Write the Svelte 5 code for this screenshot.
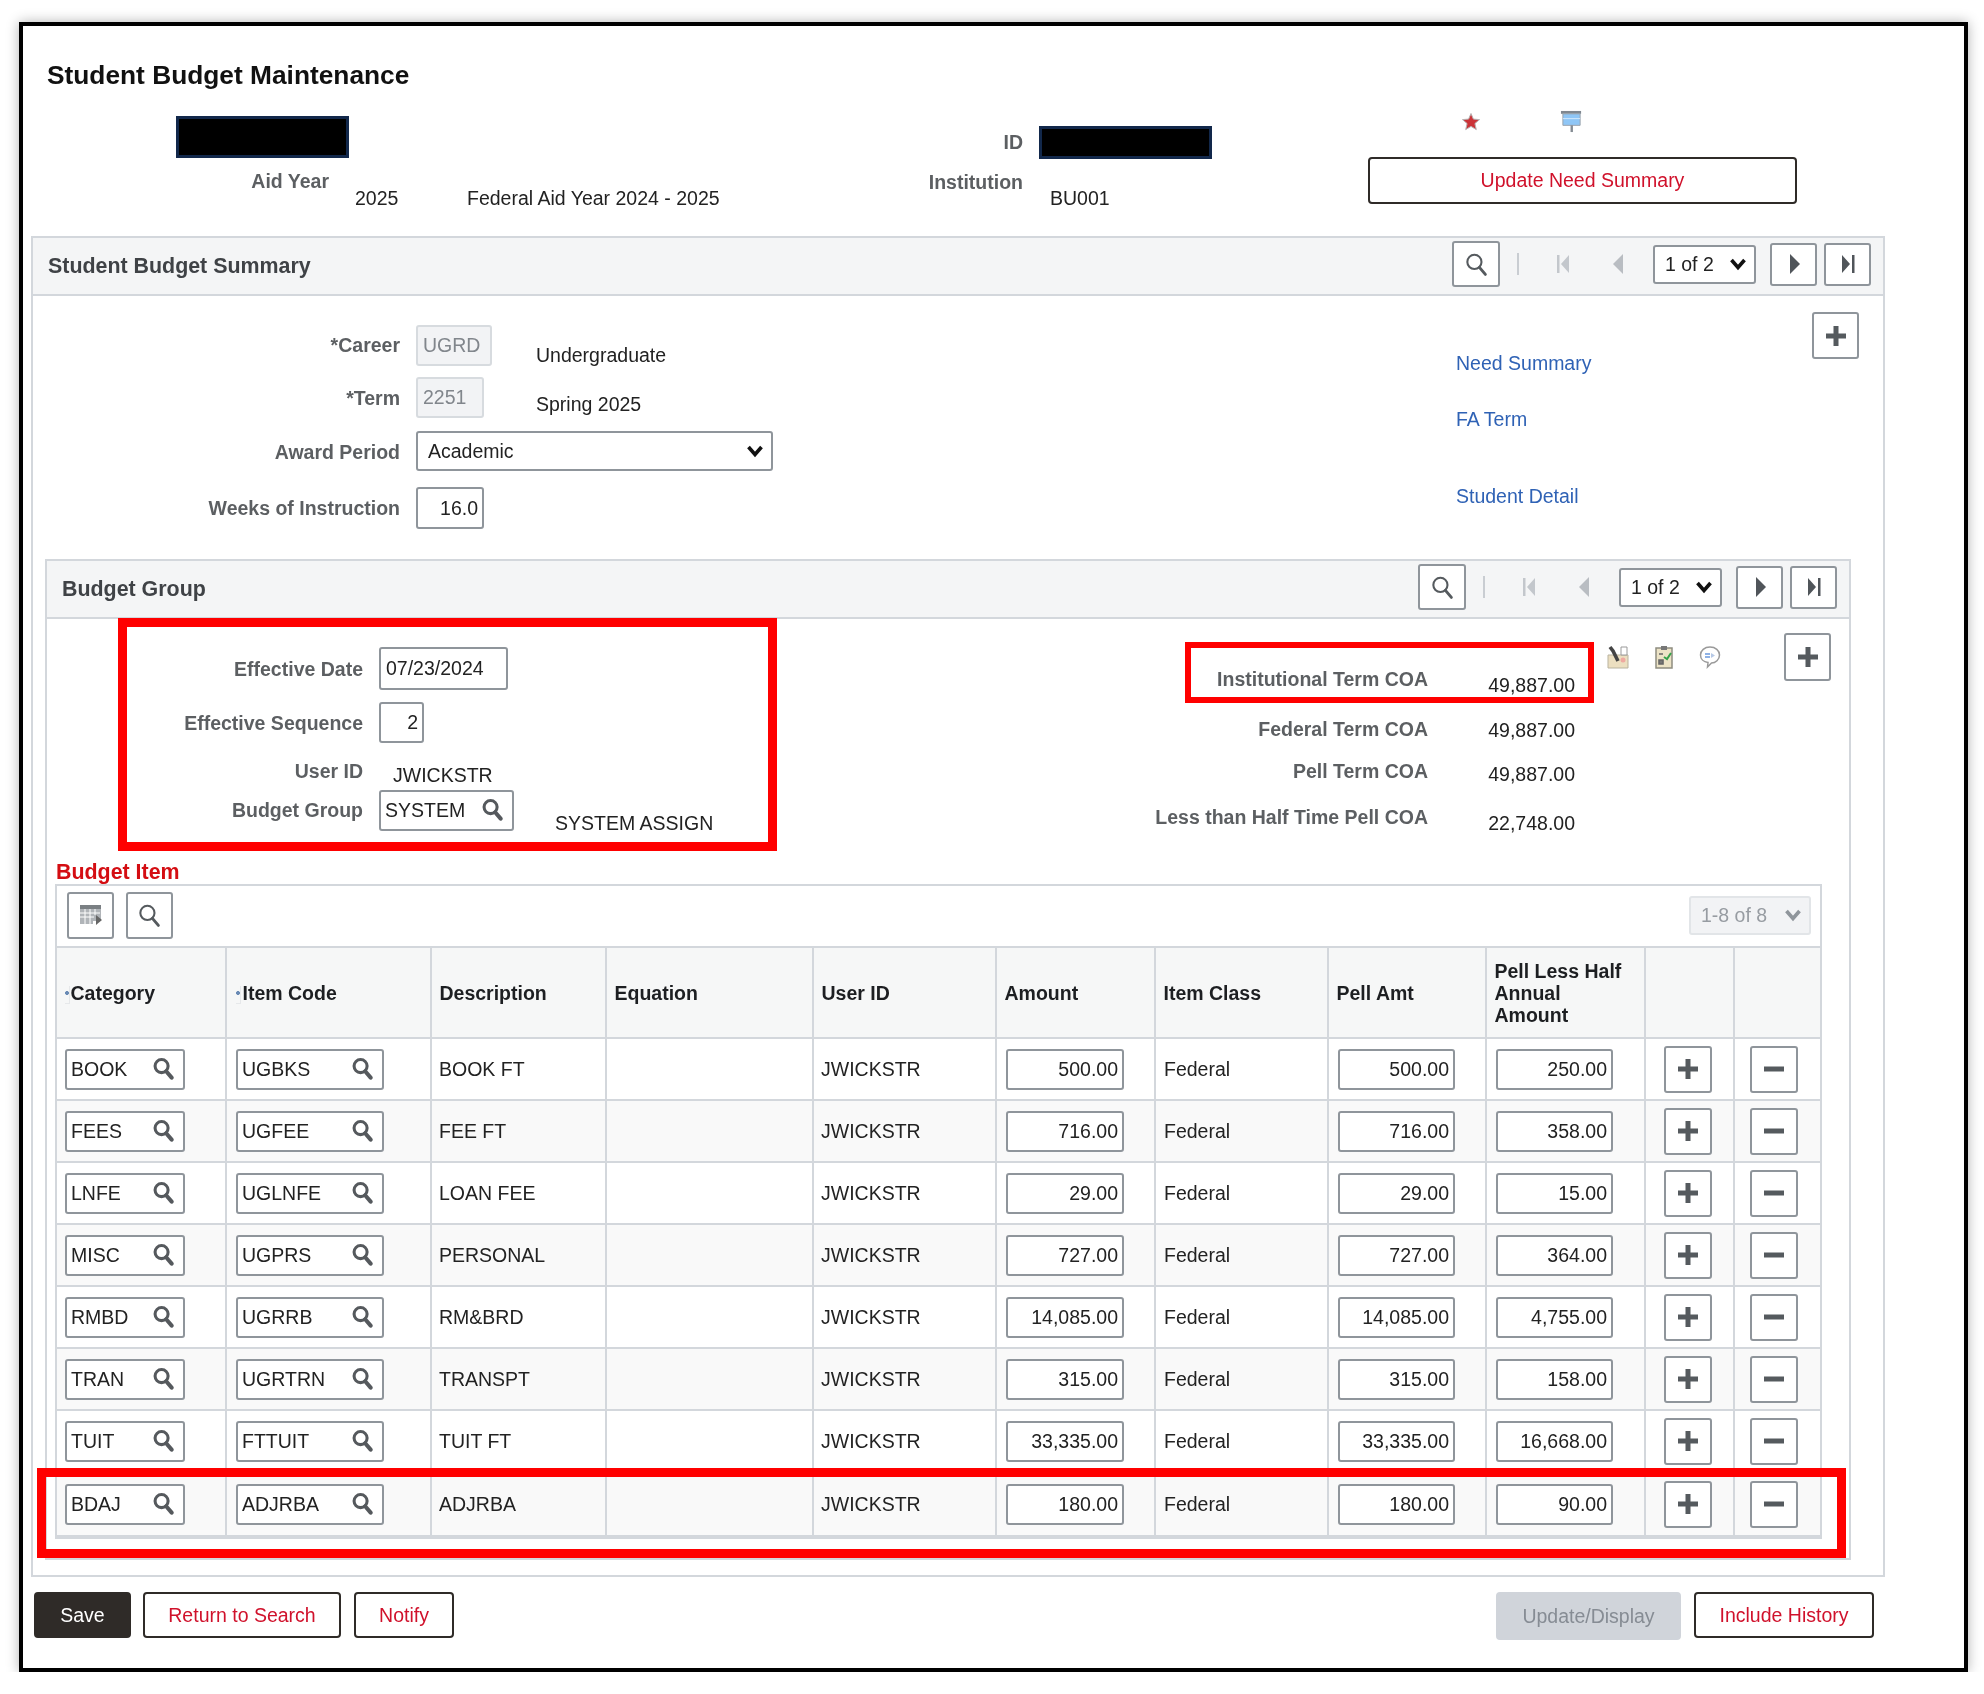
<script>
  const rows = [
    ['BOOK', 'UGBKS', 'BOOK FT', '500.00', '500.00', '250.00'],
    ['FEES', 'UGFEE', 'FEE FT', '716.00', '716.00', '358.00'],
    ['LNFE', 'UGLNFE', 'LOAN FEE', '29.00', '29.00', '15.00'],
    ['MISC', 'UGPRS', 'PERSONAL', '727.00', '727.00', '364.00'],
    ['RMBD', 'UGRRB', 'RM&BRD', '14,085.00', '14,085.00', '4,755.00'],
    ['TRAN', 'UGRTRN', 'TRANSPT', '315.00', '315.00', '158.00'],
    ['TUIT', 'FTTUIT', 'TUIT FT', '33,335.00', '33,335.00', '16,668.00'],
    ['BDAJ', 'ADJRBA', 'ADJRBA', '180.00', '180.00', '90.00']
  ];
  const coa = [
    ['Institutional Term COA', '49,887.00'],
    ['Federal Term COA', '49,887.00'],
    ['Pell Term COA', '49,887.00'],
    ['Less than Half Time Pell COA', '22,748.00']
  ];
  const widths = [170, 205, 175, 207, 183, 159, 173, 158, 159, 89, 85];
</script>

{#snippet searchIcon(cls)}
  <svg class={cls} viewBox="0 0 24 24" aria-hidden="true"><circle cx="10" cy="9.500" r="6.800" fill="none" stroke="currentColor"/><path d="M14.800 14.800 20.500 21.500" stroke="currentColor" stroke-linecap="round"/></svg>
{/snippet}

{#snippet chevron()}
  <svg class="chev" viewBox="0 0 18 14" aria-hidden="true"><path d="M2.500 3 9 10.500 15.500 3" fill="none" stroke="currentColor" stroke-width="3.600"/></svg>
{/snippet}

{#snippet plus()}
  <svg class="sign" viewBox="0 0 24 24" aria-hidden="true"><path d="M9.500 2h5v7.500H22v5h-7.500V22h-5v-7.500H2v-5h7.500z" fill="#555a5e"/></svg>
{/snippet}

{#snippet pager()}
  <div class="pager">
    <button class="ibtn search-b">{@render searchIcon('s-thin')}</button>
    <span class="sep"></span>
    <svg class="p-first" viewBox="0 0 14 22" aria-hidden="true"><path d="M1 2h2.500v18H1zM13 2v18L5 11z" fill="#c3c7cc"/></svg>
    <svg class="p-prev" viewBox="0 0 12 22" aria-hidden="true"><path d="M11 1v20L1 11z" fill="#b9bdc2"/></svg>
    <div class="sel pg-sel"><select><option>1 of 2</option></select>{@render chevron()}</div>
    <button class="ibtn nav-b"><svg class="p-nav" viewBox="0 0 14 22" aria-hidden="true"><path d="M3 1v20L13 11z" fill="#50555a"/></svg></button>
    <button class="ibtn nav-b last"><svg class="p-nav" viewBox="0 0 14 22" aria-hidden="true"><path d="M1 2v18L9 11zM11 2h2.500v18H11z" fill="#50555a"/></svg></button>
  </div>
{/snippet}

<div class="frame">
  <h1>Student Budget Maintenance</h1>

  <div class="head">
    <div class="h-left">
      <div class="redact r-name"></div>
      <div class="aid">
        <span class="lab">Aid Year</span>
        <span class="val">2025</span>
        <span class="val">Federal Aid Year 2024 - 2025</span>
      </div>
    </div>
    <div class="h-mid">
      <div class="id-row"><span class="lab">ID</span><div class="redact r-id"></div></div>
      <div class="inst"><span class="lab">Institution</span><span class="val">BU001</span></div>
    </div>
    <div class="h-right">
      <div class="top-icons">
        <svg class="star" viewBox="0 0 20 20" aria-hidden="true"><path d="M10 1.500l2.400 5.600 6.100.5-4.600 4 1.400 6L10 14.400l-5.300 3.200 1.400-6-4.600-4 6.100-.5z" fill="#cb3338" stroke="#b9b4b4" stroke-width="1"/></svg>
        <svg class="pin" viewBox="0 0 24 24" aria-hidden="true"><path d="M1 1h21v3H1z" fill="#7f8790"/><path d="M3 4h18v12H3z" fill="#8fc6f6" stroke="#9aa2aa"/><path d="M3 9h18" stroke="#d5e9fb"/><path d="M11 16h2.500v7H11z" fill="#858c94"/></svg>
      </div>
      <button class="btn outline need">Update Need Summary</button>
    </div>
  </div>

  <section class="panel outer">
    <div class="panel-head"><h2>Student Budget Summary</h2>{@render pager()}</div>
    <div class="sum-body">
      <div class="sum-form">
        <div class="frow r1"><span class="lab fl">*Career</span><input class="inp off w-career" readonly value="UGRD" /><span class="val d1">Undergraduate</span></div>
        <div class="frow r2"><span class="lab fl">*Term</span><input class="inp off w-term" readonly value="2251" /><span class="val d2">Spring 2025</span></div>
        <div class="frow r3"><span class="lab fl">Award Period</span><div class="sel award"><select><option>Academic</option></select>{@render chevron()}</div></div>
        <div class="frow r4"><span class="lab fl">Weeks of Instruction</span><input class="inp num w-term tall" readonly value="16.0" /></div>
      </div>
      <div class="links">
        <a href="#need">Need Summary</a>
        <a href="#term">FA Term</a>
        <a href="#detail">Student Detail</a>
      </div>
      <button class="ibtn add add-1">{@render plus()}</button>
    </div>

    <section class="panel inner">
      <div class="panel-head"><h2>Budget Group</h2>{@render pager()}</div>
      <div class="grp-body">
        <div class="grp-form">
          <div class="grow g1"><span class="lab gl">Effective Date</span><input class="inp w-date" readonly value="07/23/2024" /></div>
          <div class="grow g2"><span class="lab gl">Effective Sequence</span><input class="inp num w-seq" readonly value="2" /></div>
          <div class="grow g3"><span class="lab gl">User ID</span><span class="val uid">JWICKSTR</span></div>
          <div class="grow g4"><span class="lab gl">Budget Group</span>
            <div class="lookup w-group"><span>SYSTEM</span>{@render searchIcon('s-bold')}</div>
            <span class="val assign">SYSTEM ASSIGN</span>
          </div>
        </div>
        <div class="coa">
          {#each coa as [label, amount]}
            <div class="coa-row"><span class="lab">{label}</span><span class="val">{amount}</span></div>
          {/each}
        </div>
        <div class="side">
          <svg class="mini" viewBox="0 0 22 24" aria-hidden="true"><path d="M1 10h20v13H1z" fill="#ecdfc0" stroke="#b9b39f"/><path d="M14 2h6v8h-6z" fill="#fff" stroke="#9a9a9a"/><path d="M3 2l3 4 5 10" fill="none" stroke="#444" stroke-width="3.600"/><circle cx="16" cy="15" r="2.500" fill="#efa9a0"/></svg>
          <svg class="mini" viewBox="0 0 22 24" aria-hidden="true"><path d="M3 3h16v20H3z" fill="#ece3c6" stroke="#8f8d80" stroke-width="1.500"/><path d="M8 1h6v4H8z" fill="#777"/><path d="M6 9h4M6 15h4v4H6z" stroke="#666" stroke-width="1.600" fill="#777"/><path d="M11 12l3 2 4-6" fill="none" stroke="#35a14a" stroke-width="2"/></svg>
          <svg class="mini" viewBox="0 0 22 24" aria-hidden="true"><path d="M11 2c5.500 0 9.500 3.500 9.500 8s-4 8-8 8l-4 4 .5-4.500C4.500 17 1.500 14 1.500 10 1.500 5.500 5.500 2 11 2z" fill="#fff" stroke="#9a9a9a" stroke-width="1.500"/><path d="M6 9h5M6 12h5" stroke="#8fb2e6" stroke-width="2"/><path d="M12 8l4 2.500-4 2.500z" fill="#b7c9e6"/></svg>
          <button class="ibtn add add-2">{@render plus()}</button>
        </div>
      </div>

      <h3>Budget Item</h3>
      <div class="grid">
        <div class="toolbar">
          <button class="ibtn tool"><svg class="t-icon" viewBox="0 0 24 24" aria-hidden="true"><path d="M1 2h21v4H1z" fill="#7a7f83"/><path d="M1 6h21v12H14v3H1z" fill="#b0b4b8"/><path d="M1 10h20M1 14h14M6 6v15M11 6v15M16 6v6" stroke="#fff" stroke-width="1"/><path d="M17 12l6 5-6 5z" fill="#666"/></svg></button>
          <button class="ibtn tool t2">{@render searchIcon('s-thin')}</button>
          <div class="sel count"><select disabled><option>1-8 of 8</option></select>{@render chevron()}</div>
        </div>
        <table>
          <colgroup>
            {#each widths as w}<col style="width:{w}px" />{/each}
          </colgroup>
          <thead>
            <tr>
              <th><i class="req"></i>Category</th>
              <th class="th-code"><i class="req"></i>Item Code</th>
              <th>Description</th>
              <th>Equation</th>
              <th>User ID</th>
              <th>Amount</th>
              <th>Item Class</th>
              <th>Pell Amt</th>
              <th>Pell Less Half<br />Annual<br />Amount</th>
              <th></th>
              <th></th>
            </tr>
          </thead>
          <tbody>
            {#each rows as [cat, code, desc, amt, pell, half]}
              <tr>
                <td><div class="lookup w-cat"><span>{cat}</span>{@render searchIcon('s-bold')}</div></td>
                <td><div class="lookup w-code"><span>{code}</span>{@render searchIcon('s-bold')}</div></td>
                <td class="txt">{desc}</td>
                <td></td>
                <td class="txt">JWICKSTR</td>
                <td><input class="inp num w-amt" readonly value={amt} /></td>
                <td class="txt cls">Federal</td>
                <td><input class="inp num w-pell" readonly value={pell} /></td>
                <td><input class="inp num w-half" readonly value={half} /></td>
                <td><button class="ibtn row-b b-plus">{@render plus()}</button></td>
                <td><button class="ibtn row-b b-minus"><svg class="sign" viewBox="0 0 24 24" aria-hidden="true"><path d="M2 9.500h20v5H2z" fill="#555a5e"/></svg></button></td>
              </tr>
            {/each}
          </tbody>
        </table>
      </div>
    </section>
  </section>

  <div class="foot">
    <button class="btn save">Save</button>
    <button class="btn outline ret">Return to Search</button>
    <button class="btn outline notify">Notify</button>
    <button class="btn update">Update/Display</button>
    <button class="btn outline hist">Include History</button>
  </div>

  <div class="mark mark-a"></div>
  <div class="mark mark-b"></div>
  <div class="mark mark-c"></div>
</div>

<style>
  :global(body) { margin: 0; background: #fff; }
  * { box-sizing: border-box; }
  .frame {
    position: relative;
    margin: 22px 0 0 19px;
    width: 1949px;
    height: 1650px;
    border: 4px solid #000;
    box-shadow: 0 0 12px rgba(0, 0, 0, .3);
    font: 19.5px/24px "Liberation Sans", Arial, sans-serif;
    color: #222;
    background: #fff;
    filter: blur(.55px);
  }
  h1 { margin: 34px 0 0 24px; font-size: 26.3px; line-height: 30px; color: #111; height: 31px; }
  .lab { font-weight: 700; color: #5c5f62; }
  .val { color: #222; }

  /* page heading */
  .head { display: flex; height: 145px; }
  .h-left { width: 700px; }
  .h-mid { width: 645px; }
  .redact { background: #000; border: 3px solid #12284b; }
  .r-name { margin: 25px 0 0 153px; width: 173px; height: 42px; }
  .r-id { width: 173px; height: 33px; }
  .aid { display: flex; margin-top: 11px; }
  .aid .lab { width: 306px; text-align: right; }
  .aid .val { padding-top: 17px; }
  .aid .val:nth-child(2) { margin-left: 26px; width: 112px; }
  .id-row { display: flex; align-items: center; margin-top: 35px; }
  .id-row .lab { width: 300px; margin-right: 16px; padding-bottom: 2px; text-align: right; }
  .inst { display: flex; margin-top: 11px; }
  .inst .lab { width: 300px; text-align: right; }
  .inst .val { margin-left: 27px; padding-top: 16px; }
  .top-icons { display: flex; align-items: center; height: 23px; margin: 19px 0 0 93px; }
  .star { width: 20px; height: 20px; }
  .pin { width: 23px; height: 23px; margin-left: 79px; }

  .btn {
    display: block;
    padding: 0;
    font: inherit;
    border-radius: 4px;
    border: 2px solid #2f2b28;
    background: #fff;
    height: 46px;
  }
  .outline { color: #d0112b; }
  .need { width: 429px; height: 47px; margin-top: 24px; padding-bottom: 2px; }

  /* panels */
  .panel { border: 2px solid #d3d7dc; }
  .outer { margin-left: 8px; width: 1854px; height: 1341px; }
  .inner { margin-left: 12px; width: 1806px; height: 1001px; }
  .panel-head {
    display: flex;
    align-items: center;
    height: 58px;
    padding: 0 12px 4px 15px;
    background: #f4f5f6;
    border-bottom: 2px solid #d3d7dc;
  }
  h2 { margin: 4px 0 0; font-size: 21.4px; font-weight: 700; color: #3f4246; }
  .pager { display: flex; align-items: center; margin-left: auto; }
  .ibtn {
    display: flex;
    align-items: center;
    justify-content: center;
    padding: 0;
    background: #fff;
    border: 2px solid #8f959b;
    border-radius: 3px;
    color: #555a5e;
  }
  .search-b { width: 48px; height: 46px; }
  .sep { width: 2px; height: 22px; margin-left: 17px; background: #c9cdd2; }
  .p-first { width: 14px; height: 22px; margin-left: 37px; }
  .p-prev { width: 12px; height: 22px; margin-left: 42px; }
  .pg-sel { width: 103px; height: 39px; margin-left: 29px; }
  .nav-b { width: 47px; height: 43px; margin-left: 14px; }
  .nav-b.last { margin-left: 7px; }
  .p-nav { width: 14px; height: 22px; }
  .s-thin { width: 25px; height: 25px; }
  .s-thin circle { stroke-width: 2; }
  .s-thin path { stroke-width: 2.800; }
  .s-bold { flex: none; width: 23px; height: 23px; margin-top: -1px; color: #55595d; }
  .s-bold circle { stroke-width: 3.200; }
  .s-bold path { stroke-width: 4.200; }

  .sel { position: relative; display: block; }
  .sel select {
    appearance: none;
    display: block;
    width: 100%;
    height: 100%;
    padding: 0 0 0 10px;
    font: inherit;
    color: #222;
    background: #fff;
    border: 2px solid #8f959b;
    border-radius: 3px;
    opacity: 1;
  }
  .chev { position: absolute; right: 9px; top: 50%; width: 18px; height: 14px; margin-top: -7px; color: #111; pointer-events: none; }
  .inp {
    display: block;
    height: 41px;
    padding: 0 5px;
    font: inherit;
    color: #222;
    background: #fff;
    border: 2px solid #8f959b;
    border-radius: 3px;
    outline: none;
  }
  .num { text-align: right; padding-right: 4px; }
  .off { background: #f2f3f5; border-color: #d7dbdf; color: #81868c; }

  /* summary */
  .sum-body { display: flex; height: 263px; }
  .sum-form { width: 1423px; padding-top: 27px; }
  .frow { display: flex; align-items: center; }
  .fl { width: 367px; margin-right: 16px; text-align: right; }
  .r2 { margin-top: 10px; }
  .r3 { margin-top: 13px; }
  .r3 .fl { padding-top: 2px; }
  .r4 { margin-top: 16px; }
  .w-career { width: 76px; }
  .w-term { width: 68px; }
  .tall { height: 42px; }
  .d1 { margin-left: 44px; padding-top: 20px; }
  .d2 { margin-left: 52px; padding-top: 13px; }
  .award { width: 357px; height: 40px; }
  .links { width: 356px; padding-top: 55px; display: flex; flex-direction: column; }
  .links a { color: #2f62b5; text-decoration: none; }
  .links a:nth-child(2) { margin-top: 32px; }
  .links a:nth-child(3) { margin-top: 53px; }
  .add { width: 47px; height: 47px; }
  .add-1 { margin-top: 16px; }
  .sign { width: 24px; height: 24px; }

  /* budget group */
  .grp-body { display: flex; height: 241px; }
  .grp-form { width: 1001px; padding-top: 28px; }
  .grow { display: flex; align-items: center; }
  .gl { width: 316px; margin-right: 16px; text-align: right; }
  .g1 .inp { height: 43px; }
  .w-date { width: 129px; }
  .w-seq { width: 45px; }
  .g2 { margin-top: 12px; }
  .g3 { margin-top: 16px; height: 26px; align-items: flex-start; }
  .uid { margin: 4px 0 0 14px; }
  .w-group { width: 135px; height: 42px; }
  .assign { margin-left: 41px; padding-top: 26px; }
  .lookup {
    display: flex;
    align-items: center;
    justify-content: space-between;
    height: 41px;
    padding: 0 8px 0 4px;
    background: #fff;
    border: 2px solid #8f959b;
    border-radius: 3px;
  }
  .coa { width: 527px; padding-top: 48px; }
  .coa-row { display: flex; height: 46px; }
  .coa-row .lab { width: 380px; text-align: right; }
  .coa-row .val { width: 147px; text-align: right; }
  .coa-row:nth-child(1) { height: 50px; }
  .coa-row:nth-child(1) .val { padding-top: 6px; }
  .coa-row:nth-child(2) { height: 42px; }
  .coa-row:nth-child(2) .val { padding-top: 1px; }
  .coa-row:nth-child(3) .val { padding-top: 3px; }
  .coa-row:nth-child(4) .val { padding-top: 6px; }
  .side { display: flex; align-items: center; align-self: flex-start; margin: 14px 0 0 32px; }
  .mini { width: 22px; height: 24px; margin-right: 24px; }
  .add-2 { margin-left: 39px; height: 48px; }

  h3 { margin: 0 0 0 9px; font-size: 21.4px; line-height: 24px; font-weight: 700; color: #d40d12; }
  .grid { margin-left: 8px; width: 1767px; border: 2px solid #d3d7dc; border-top: 0; border-bottom-width: 4px; }
  .toolbar { display: flex; align-items: center; height: 64px; padding: 0 9px 2px 10px; border-top: 2px solid #d3d7dc; border-bottom: 2px solid #d3d7dc; }
  .tool { width: 47px; height: 47px; }
  .t2 { margin-left: 12px; }
  .t-icon { width: 24px; height: 24px; }
  .count { margin-left: auto; width: 122px; height: 39px; }
  .count select { background: #f2f3f5; border-color: #e2e5e8; color: #979ca2; }
  .count .chev { color: #8f959b; }

  table { width: 1763px; table-layout: fixed; border-collapse: separate; border-spacing: 0; }
  th, td { padding: 0; border-right: 2px solid #d3d7dc; border-bottom: 2px solid #d3d7dc; }
  th:last-child, td:last-child { border-right: 0; }
  tbody tr:last-child td { border-bottom: 0; }
  th { height: 91px; padding-left: 7.500px; background: #f6f7f7; text-align: left; font-weight: 700; line-height: 22px; color: #1d1f22; }
  .th-code { padding-left: 8.500px; }
  .th-code .req { margin-right: 2px; }
  td { height: 62px; background: #fff; }
  tbody tr:nth-child(even) td { background: #f9f9f9; }
  .req { display: inline-block; width: 5px; height: 18px; margin-right: 1px; vertical-align: -4px; background: radial-gradient(circle at 2px 7px, #6a8bb5 1.800px, transparent 2.200px); border-right: 1px solid #e6e8ea; border-bottom: 1px solid #e6e8ea; }
  .txt { padding-left: 7px; }
  .cls { padding-left: 8px; }
  td > .lookup, td > .inp, td > .ibtn { margin-left: 9px; }
  td:first-child > .lookup { margin-left: 8px; }
  .w-cat { width: 120px; }
  .w-code { width: 148px; }
  .w-amt { width: 118px; }
  .w-pell { width: 117px; }
  .w-half { width: 117px; }
  td > .row-b { width: 48px; height: 47px; }
  td > .b-plus { margin-left: 18px; }
  td > .b-minus { margin-left: 15px; }

  /* actions */
  .foot { display: flex; margin: 15px 90px 0 11px; }
  .save { width: 97px; background: #2f2b28; color: #fff; }
  .ret { width: 198px; margin-left: 12px; }
  .notify { width: 100px; margin-left: 13px; }
  .update { width: 185px; height: 48px; margin-left: auto; background: #d0d4da; border-color: #d0d4da; color: #868c94; }
  .hist { width: 180px; margin-left: 13px; }

  /* review annotations drawn over the screen */
  .mark { position: absolute; border: 9px solid #f00; pointer-events: none; }
  .mark-a { left: 95px; top: 592px; width: 659px; height: 233px; }
  .mark-b { left: 1162px; top: 616px; width: 409px; height: 61px; border-width: 6px; }
  .mark-c { left: 14px; top: 1442px; width: 1809px; height: 90px; }
</style>
